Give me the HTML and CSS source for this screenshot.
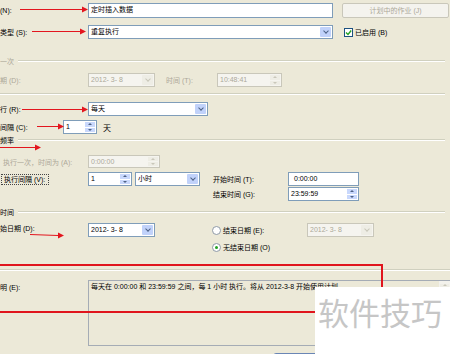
FILE: index.html
```html
<!DOCTYPE html>
<html lang="zh">
<head>
    <meta charset="UTF-8">
    <meta name="viewport" content="width=device-width, initial-scale=1.0">
    <title>作业计划属性</title>
    <link rel="stylesheet" href="styles.css">
</head>
<body>
    <div class="dialog">
        <div class="row row-name">
            <span class="lbl">(N):</span>
            <div class="field name-field"><span class="val">定时插入数据</span></div>
            <div class="btn btn-off">计划中的作业 (J)</div>
        </div>

        <div class="row row-type">
            <span class="lbl">类型 (S):</span>
            <div class="field type-field"><span class="val">重复执行</span><span class="drop"></span></div>
            <div class="check"><span class="box"><svg width="7" height="7" viewBox="0 0 7 7"><path d="M1 3.5 L3 5.5 L6.2 1.5" fill="none" stroke="#21a121" stroke-width="1.4"/></svg></span>已启用 (B)</div>
        </div>

        <div class="group off g-once"><span class="g-title">一次</span><span class="g-line"></span></div>

        <div class="row row-once off">
            <span class="lbl">期 (D):</span>
            <div class="field off date-field"><span class="val">2012- 3- 8</span><span class="drop"></span></div>
            <span class="lbl-mid">时间 (T):</span>
            <div class="field off time-field"><span class="val">10:48:41</span><span class="spin"><i class="up"></i><i class="dn"></i></span></div>
        </div>

        <div class="sep sep-top"></div>

        <div class="row row-run">
            <span class="lbl">行 (R):</span>
            <div class="field run-field"><span class="val">每天</span><span class="drop"></span></div>
        </div>

        <div class="row row-every">
            <span class="lbl lbl-short">间隔 (C):</span>
            <div class="field every-field"><span class="val">1</span><span class="spin"><i class="up"></i><i class="dn"></i></span></div>
            <span class="unit">天</span>
        </div>

        <div class="group g-freq"><span class="g-title">频率</span><span class="g-line"></span></div>

        <div class="row row-single">
            <span class="lbl lbl-indent off">执行一次，时间为 (A):</span>
            <div class="field off single-field"><span class="val">0:00:00</span><span class="spin"><i class="up"></i><i class="dn"></i></span></div>
        </div>

        <div class="row row-repeat">
            <div class="lbl"><span class="focus">执行间隔 (V):</span></div>
            <div class="field step-field"><span class="val">1</span><span class="spin"><i class="up"></i><i class="dn"></i></span></div>
            <div class="field unit-field"><span class="val">小时</span><span class="drop"></span></div>
            <div class="times">
                <div class="time-row">
                    <span class="lbl-time">开始时间 (T):</span>
                    <div class="field clock-field"><span class="val val-right">0:00:00</span></div>
                </div>
                <div class="time-row">
                    <span class="lbl-time">结束时间 (G):</span>
                    <div class="field clock-field"><span class="val">23:59:59</span><span class="spin"><i class="up"></i><i class="dn"></i></span></div>
                </div>
            </div>
        </div>

        <div class="group g-span"><span class="g-title">时间</span><span class="g-line"></span></div>

        <div class="row row-start">
            <span class="lbl">始日期 (D):</span>
            <div class="field date-field"><span class="val">2012- 3- 8</span><span class="drop"></span></div>
            <div class="ends">
                <div class="end-row">
                    <span class="radio"></span>
                    <span class="lbl-end">结束日期 (E):</span>
                    <div class="field off date-field"><span class="val">2012- 3- 8</span><span class="drop"></span></div>
                </div>
                <div class="end-row">
                    <span class="radio on"></span>
                    <span class="lbl-end">无结束日期 (O)</span>
                </div>
            </div>
        </div>

        <div class="sep sep-bottom"></div>

        <div class="row row-desc">
            <span class="lbl">明 (E):</span>
            <div class="memo">
                <div class="memo-text">每天在 0:00:00 和 23:59:59 之间，每 1 小时 执行。将从 2012-3-8 开始使用计划。</div>
                <div class="memo-bar"><span class="bar-up"></span></div>
            </div>
        </div>

        <div class="ok-btn"></div>

        <!-- annotations drawn over the screenshot -->
        <svg class="arrows" width="450" height="354" viewBox="0 0 450 354">
            <g stroke="#e3161e" stroke-width="1" fill="none">
                <path d="M20 9.5 H82"/>
                <path d="M32 31.5 H80"/>
                <path d="M22 109.5 H82"/>
                <path d="M37 126.5 H58"/>
                <path d="M0 147.5 H35"/>
                <path d="M30 234.5 L58 235.5"/>
            </g>
            <g fill="#e3161e">
                <polygon points="82,6.5 88,9.5 82,12.5"/>
                <polygon points="80,28.5 86,31.5 80,34.5"/>
                <polygon points="82,106.5 88,109.5 82,112.5"/>
                <polygon points="58,123.5 64,126.5 58,129.5"/>
                <polygon points="35,144.5 41,147.5 35,150.5"/>
                <polygon points="58,232.5 64,235.5 58,238.5"/>
            </g>
        </svg>
        <div class="red-box"></div>
        <div class="watermark">软件技巧</div>
    </div>
</body>
</html>
```

FILE: styles.css
```css
body {
    margin: 0;
    padding: 0;
    background-color: #ece9d8;
    font-family: "Liberation Sans", "Noto Sans CJK SC", sans-serif;
    font-size: 7px;
    color: #000;
    overflow: hidden;
}
.dialog {
    position: relative;
    width: 450px;
    height: 354px;
    overflow: hidden;
}
.row {
    display: flex;
    align-items: center;
    height: 14px;
    white-space: nowrap;
}
.lbl {
    width: 88px;
    flex: none;
}
.off {
    color: #aca899;
}

/* text boxes and combos */
.field {
    display: flex;
    box-sizing: border-box;
    height: 14px;
    border: 1px solid #7f9db9;
    background-color: #fff;
    color: #000;
    flex: none;
}
.field.off {
    border-color: #c9c7ba;
    background-color: #f5f4ef;
    color: #aca899;
}
.val {
    flex: 1;
    padding-left: 2px;
    line-height: 12px;
    overflow: hidden;
}
.val-right {
    padding-left: 5px;
}
.drop {
    width: 11px;
    margin: 1px;
    border-radius: 1px;
    background-color: #c1d2fa;
    display: flex;
    align-items: center;
    justify-content: center;
}
.drop::after {
    content: "";
    width: 3px;
    height: 3px;
    margin-top: -2px;
    border-right: 1.5px solid #4d6185;
    border-bottom: 1.5px solid #4d6185;
    transform: rotate(45deg);
}
.field.off .drop {
    background-color: #eeede5;
}
.field.off .drop::after {
    border-color: #c9c7ba;
}
.spin {
    width: 10px;
    margin: 1px;
    display: flex;
    flex-direction: column;
    gap: 1px;
}
.spin i {
    flex: 1;
    background-color: #c9d8fc;
    display: flex;
    align-items: center;
    justify-content: center;
}
.spin i::after {
    content: "";
    border-left: 2px solid transparent;
    border-right: 2px solid transparent;
}
.spin .up::after {
    border-bottom: 2px solid #4d6185;
}
.spin .dn::after {
    border-top: 2px solid #4d6185;
}
.field.off .spin i {
    background-color: #eeede5;
}
.field.off .spin .up::after {
    border-bottom-color: #c9c7ba;
}
.field.off .spin .dn::after {
    border-top-color: #c9c7ba;
}

/* row 1 and 2 */
.row-name {
    margin-top: 3px;
    height: 15px;
}
.name-field {
    width: 245px;
    height: 15px;
}
.btn {
    box-sizing: border-box;
    margin-left: 9px;
    width: 107px;
    height: 15px;
    line-height: 13px;
    text-align: center;
    border: 1px solid #c9c7ba;
    border-radius: 2px;
}
.btn-off {
    color: #aca899;
    background-color: #f4f3ee;
}
.row-type {
    margin-top: 7px;
}
.type-field {
    width: 245px;
}
.check {
    display: flex;
    align-items: center;
    margin-left: 11px;
}
.box {
    box-sizing: border-box;
    width: 9px;
    height: 9px;
    border: 1px solid #1c5180;
    background-color: #fff;
    margin-right: 2px;
    display: flex;
    align-items: center;
    justify-content: center;
}

/* group headers */
.group {
    display: flex;
    align-items: center;
    height: 10px;
    margin-right: 5px;
    white-space: nowrap;
}
.g-line {
    flex: 1;
    border-top: 1px solid #d0d0bf;
    border-bottom: 1px solid #fff;
    margin-left: 4px;
}
.g-once {
    margin-top: 17px;
}
.g-freq {
    margin-top: 1px;
}
.g-span {
    margin-top: 6px;
}
.sep {
    margin-right: 5px;
    border-top: 1px solid #d0d0bf;
    border-bottom: 1px solid #fff;
}
.sep-top {
    margin-top: 6px;
}
.sep-bottom {
    margin-top: 15px;
    margin-right: 0;
}

/* once */
.row-once {
    margin-top: 7px;
}
.date-field {
    width: 67px;
}
.lbl-mid {
    margin-left: 11px;
    width: 51px;
}
.time-field {
    width: 65px;
}

/* repeat */
.row-run {
    margin-top: 7px;
}
.run-field {
    width: 120px;
}
.row-every {
    margin-top: 4px;
}
.lbl-short {
    width: 63px;
}
.every-field {
    width: 34px;
}
.unit {
    margin-left: 6px;
    font-size: 8px;
}
.row-single {
    margin-top: 10px;
    height: 13px;
}
.row-single .field {
    height: 13px;
}
.lbl-indent {
    padding-left: 3px;
    width: 85px;
}
.single-field {
    width: 72px;
}
.row-repeat {
    margin-top: 4px;
    height: 29px;
    align-items: flex-start;
}
.focus {
    display: inline-block;
    margin-top: 2px;
    margin-left: 1px;
    padding: 0 3px 0 2px;
    line-height: 9px;
    border: 1px dotted #444;
}
.step-field {
    width: 44px;
}
.unit-field {
    width: 65px;
    margin-left: 3px;
}
.times {
    margin-left: 13px;
    display: flex;
    flex-direction: column;
    gap: 1px;
}
.time-row {
    display: flex;
    align-items: center;
}
.lbl-time {
    width: 75px;
}
.clock-field {
    width: 71px;
}

/* duration */
.row-start {
    margin-top: 6px;
    height: 31px;
    align-items: flex-start;
}
.ends {
    margin-left: 57px;
    display: flex;
    flex-direction: column;
    gap: 3px;
}
.end-row {
    display: flex;
    align-items: center;
    height: 14px;
}
.radio {
    box-sizing: border-box;
    width: 9px;
    height: 9px;
    border: 1px solid #8f9aa6;
    border-radius: 50%;
    background-color: #fff;
    margin-right: 2px;
    display: flex;
    align-items: center;
    justify-content: center;
}
.radio.on::after {
    content: "";
    width: 3px;
    height: 3px;
    border-radius: 50%;
    background-color: #21a121;
}
.lbl-end {
    width: 84px;
}

/* description */
.row-desc {
    margin-top: 9px;
    height: 66px;
    align-items: flex-start;
}
.row-desc .lbl {
    margin-top: 2px;
}
.memo {
    flex: 1;
    display: flex;
    height: 66px;
    box-sizing: border-box;
    border: 1px solid #a5acb5;
    border-right: none;
}
.memo-text {
    flex: 1;
    padding: 1px 2px;
    line-height: 10px;
}
.memo-bar {
    width: 11px;
    background-color: #f3f2ec;
}
.bar-up {
    display: block;
    height: 9px;
    margin: 1px;
    background-color: #eeede5;
}
.bar-up::after {
    content: "";
    display: block;
    width: 0;
    margin: 3px auto 0;
    border-left: 2px solid transparent;
    border-right: 2px solid transparent;
    border-bottom: 2px solid #c9c7ba;
}
.ok-btn {
    margin: 7px 0 0 273px;
    width: 75px;
    height: 20px;
    box-sizing: border-box;
    border: 1px solid #6a86b5;
    border-radius: 3px;
    background-color: #f6f6f2;
}

/* overlays */
.arrows {
    position: absolute;
    left: 0;
    top: 0;
    pointer-events: none;
}
.red-box {
    position: absolute;
    left: -2px;
    top: 264px;
    width: 381px;
    height: 45px;
    border: 2px solid #e0151d;
}
.watermark {
    position: absolute;
    left: 315px;
    top: 287px;
    width: 135px;
    height: 67px;
    background-color: #fff;
    color: #c6c6c6;
    font-family: "Noto Sans CJK SC", sans-serif;
    font-size: 31px;
    line-height: 50px;
    padding-left: 3px;
    box-sizing: border-box;
}
```
